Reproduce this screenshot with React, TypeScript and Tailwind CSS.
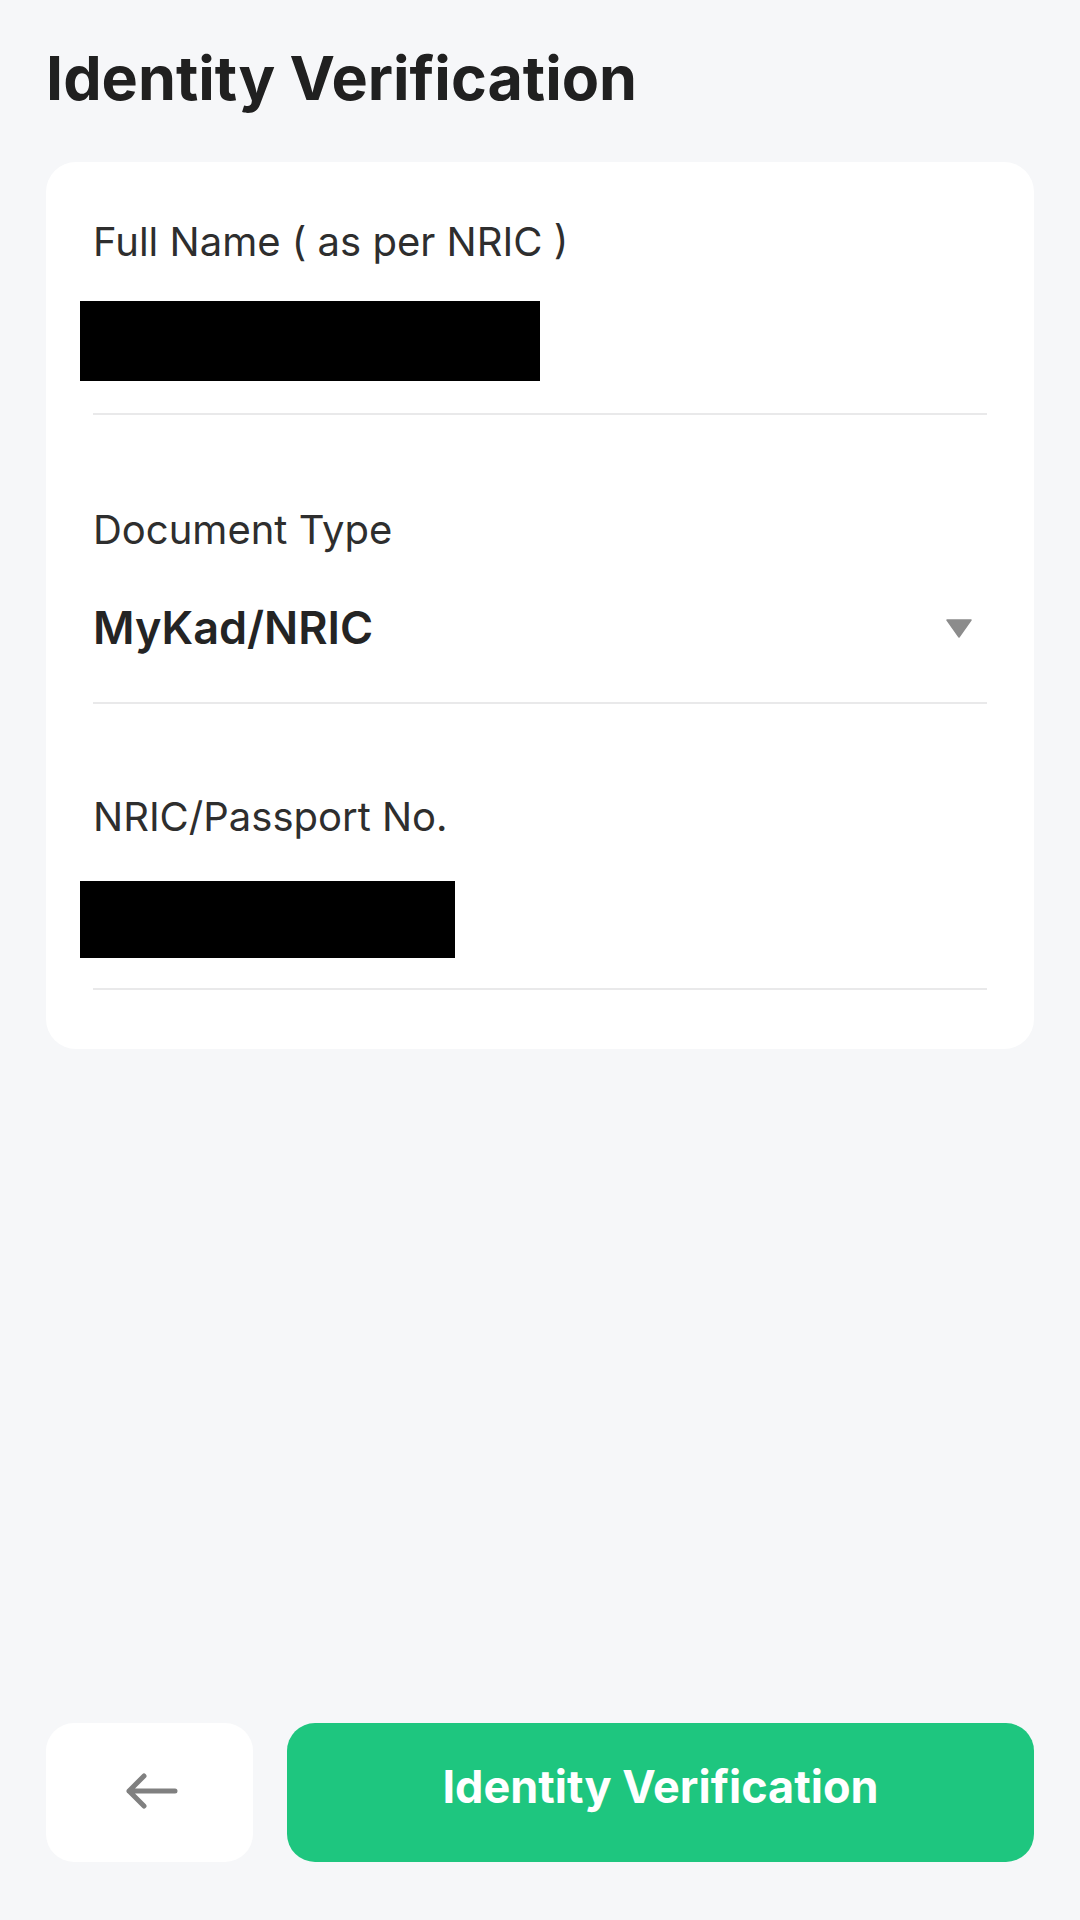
import React from "react";

export default function App() {
  return (
    <div
      className="flex h-[1920px] w-[1080px] flex-col bg-[#f6f7f9] px-[46px]"
      style={{ fontFamily: "Inter, 'Noto Sans', 'Liberation Sans', sans-serif" }}
    >
      <h1 className="pt-[41px] text-[61px] font-bold leading-[74px] text-[#202020]">
        Identity Verification
      </h1>

      <div className="mt-[47px] flex flex-col rounded-[30px] bg-white px-[47px] pb-[59px] pt-[56px]">
        <div className="text-[40px] leading-[48px] text-[#2e2e2e]">Full Name ( as per NRIC )</div>
        <div className="ml-[-13px] mt-[35px] h-[80px] w-[460px] bg-black" />
        <div className="mt-[32px] h-[2px] w-full bg-[#e9e9ea]" />

        <div className="mt-[91px] text-[40px] leading-[48px] text-[#2e2e2e]">Document Type</div>
        <div className="mt-[47px] flex h-[54px] items-center justify-between">
          <span className="text-[45px] font-semibold leading-[54px] text-[#242424]">MyKad/NRIC</span>
          <svg width="26" height="19" viewBox="0 0 26 19" className="mr-[15px]">
            <path d="M1 1 L25 1 L13 18 Z" fill="#8c8c8c" stroke="#8c8c8c" strokeWidth="1.5" strokeLinejoin="round" />
          </svg>
        </div>
        <div className="mt-[47px] h-[2px] w-full bg-[#e9e9ea]" />

        <div className="mt-[89px] text-[40px] leading-[48px] text-[#2e2e2e]">NRIC/Passport No.</div>
        <div className="ml-[-13px] mt-[40px] h-[77px] w-[375px] bg-black" />
        <div className="mt-[30px] h-[2px] w-full bg-[#e9e9ea]" />
      </div>

      <div className="flex-1" />

      <div className="mb-[58px] flex h-[139px] gap-[34px]">
        <button className="flex w-[207px] items-center justify-center rounded-[28px] bg-white pb-[3px]">
          <svg width="52" height="36" viewBox="0 0 52 36" className="ml-[4px]">
            <path
              d="M3 18 L49 18 M18 3 L3 18 L18 33"
              fill="none"
              stroke="#808080"
              strokeWidth="5"
              strokeLinecap="round"
              strokeLinejoin="round"
            />
          </svg>
        </button>
        <button className="flex flex-1 items-center justify-center rounded-[28px] bg-[#1ec67f] pb-[12px] text-[45px] font-bold text-white">
          Identity Verification
        </button>
      </div>
    </div>
  );
}
